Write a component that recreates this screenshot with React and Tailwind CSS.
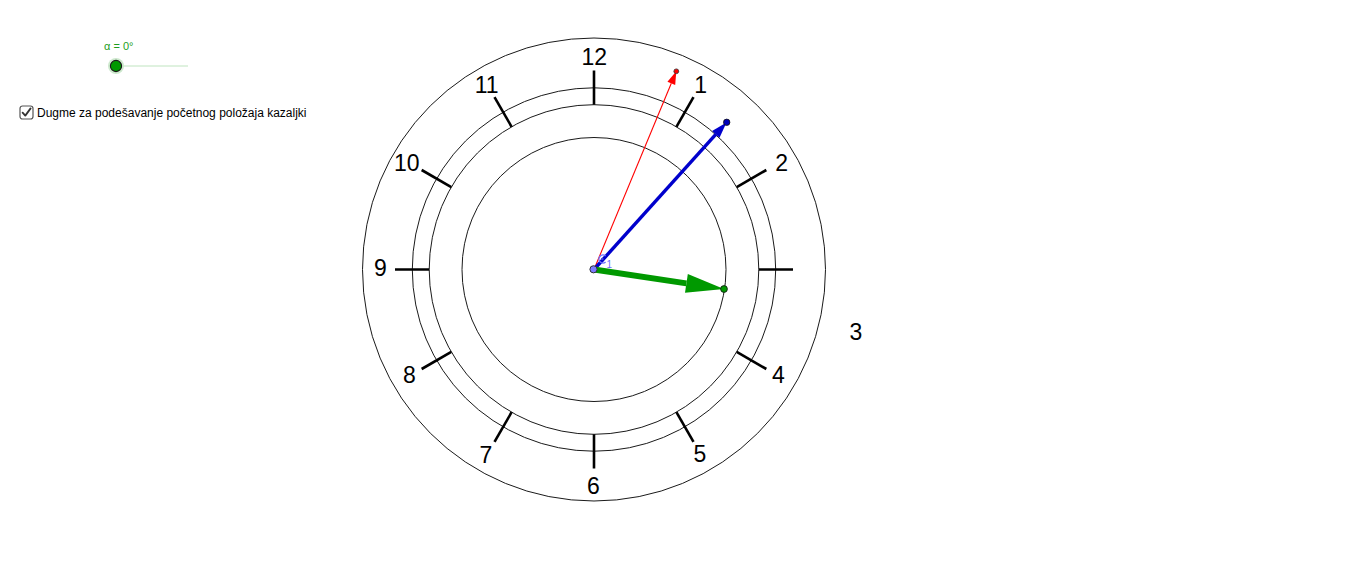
import React from 'react';

const CX = 594;
const CY = 269.5;
const HOURS = [12, 1, 2, 3, 4, 5, 6, 7, 8, 9, 10, 11];

// where GeoGebra put each label (3 sits off on its own)
const LABELS = {
  12: [594.3, 57],
  1: [700.7, 85],
  2: [781.7, 162.5],
  3: [856, 331.5],
  4: [778.3, 375],
  5: [700, 453.5],
  6: [593.5, 485.5],
  7: [486, 455],
  8: [409.5, 375],
  9: [380.5, 267.5],
  10: [406.7, 162.5],
  11: [486.7, 85],
};

function arrow(x1, y1, x2, y2, headLen, headHalf) {
  const dx = x2 - x1;
  const dy = y2 - y1;
  const len = Math.hypot(dx, dy);
  const ux = dx / len;
  const uy = dy / len;
  const bx = x2 - ux * headLen;
  const by = y2 - uy * headLen;
  const px = -uy * headHalf;
  const py = ux * headHalf;
  return {
    base: [bx, by],
    head: `${x2},${y2} ${bx + px},${by + py} ${bx - px},${by - py}`,
  };
}

function Hand({ to, color, width, headLen, headHalf }) {
  const a = arrow(CX, CY, to[0], to[1], headLen, headHalf);
  return (
    <g>
      <line x1={CX} y1={CY} x2={a.base[0]} y2={a.base[1]} stroke={color} strokeWidth={width} />
      <polygon points={a.head} fill={color} />
    </g>
  );
}

function Clock() {
  return (
    <svg width="1026" height="568" viewBox="340 0 1026 568" className="block shrink-0">
      <g fill="none" stroke="#1a1a1a" strokeWidth="1">
        <circle cx={CX} cy={CY} r="231.5" />
        <circle cx={CX} cy={CY} r="181.7" />
        <circle cx={CX} cy={CY} r="164.8" />
        <circle cx={CX} cy={CY} r="132" />
      </g>

      {HOURS.map((h, i) => {
        const ang = (i * 30 * Math.PI) / 180;
        const s = Math.sin(ang);
        const c = Math.cos(ang);
        return (
          <line
            key={h}
            x1={CX + s * 164.8}
            y1={CY - c * 164.8}
            x2={CX + s * 199}
            y2={CY - c * 199}
            stroke="#000"
            strokeWidth="2.6"
          />
        );
      })}

      {HOURS.map((h) => (
        <text
          key={h}
          x={LABELS[h][0]}
          y={LABELS[h][1]}
          textAnchor="middle"
          dominantBaseline="central"
          fontFamily="'Liberation Sans', Arial, sans-serif"
          fontSize="23"
          fill="#000"
        >
          {h}
        </text>
      ))}

      <Hand to={[676.3, 71.3]} color="#ff0000" width={1.1} headLen={13} headHalf={4.2} />
      <Hand to={[726.5, 122.5]} color="#0000cc" width={3.4} headLen={16} headHalf={5} />
      <Hand to={[724, 289]} color="#009900" width={6} headLen={38} headHalf={9.5} />

      <circle cx="676.3" cy="71.3" r="2.4" fill="#ff0000" stroke="#333" strokeWidth="0.8" />
      <circle cx="726.7" cy="122.3" r="3.2" fill="#0000bb" stroke="#111" strokeWidth="0.8" />
      <circle cx="724" cy="289" r="3.4" fill="#009900" stroke="#111" strokeWidth="0.8" />

      {/* C1 label */}
      <path d="M605.6 256 A4 4 0 1 0 605.6 262" fill="none" stroke="#7070ff" strokeWidth="1.4" />
      <circle cx="602.3" cy="259" r="1.3" fill="#4444dd" />
      <text x="606.5" y="267.5" fontFamily="'Liberation Sans', Arial, sans-serif" fontSize="10" fill="#7070ff">
        1
      </text>

      <circle cx="593.5" cy="269.3" r="3.6" fill="#7b7bff" stroke="#333" strokeWidth="1" />
    </svg>
  );
}

function Slider() {
  return (
    <div className="flex flex-col items-start">
      <div className="pl-[104px] pt-[40px] text-[11px] leading-[13px] text-[#1e9e1e]" style={{ fontFamily: "'Liberation Sans', Arial, sans-serif" }}>
        α = 0°
      </div>
      <svg width="200" height="18" viewBox="0 57 200 18" className="block mt-[4px]">
        <line x1="116" y1="66" x2="188" y2="66" stroke="#bfe4bf" strokeWidth="1" />
        <circle cx="116" cy="66" r="8" fill="#cde8cd" />
        <circle cx="116" cy="66" r="5.6" fill="#009900" stroke="#1a1a1a" strokeWidth="1.1" />
      </svg>
    </div>
  );
}

function Checkbox() {
  return (
    <label className="flex items-center gap-[3px] pl-[19px] mt-[30px] text-[12px] leading-[14px] text-black" style={{ fontFamily: "'Liberation Sans', Arial, sans-serif" }}>
      <svg width="15" height="15" viewBox="0 0 15 15" className="block shrink-0">
        <rect x="1" y="1" width="13" height="13" rx="2.5" fill="#fff" stroke="#555" strokeWidth="1.2" />
        <path d="M3.6 7.6 L6.3 10.6 L11.6 3.4" fill="none" stroke="#333" strokeWidth="1.8" strokeLinecap="round" strokeLinejoin="round" />
      </svg>
      <span>Dugme za podešavanje početnog položaja kazaljki</span>
    </label>
  );
}

export default function App() {
  return (
    <div className="flex w-[1366px] h-[568px] bg-white overflow-hidden">
      <div className="w-[340px] shrink-0 flex flex-col">
        <Slider />
        <Checkbox />
      </div>
      <Clock />
    </div>
  );
}
